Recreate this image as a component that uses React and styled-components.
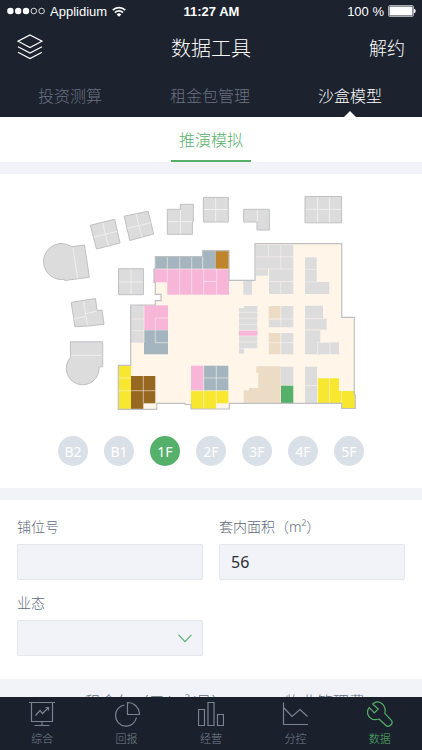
import { useState } from 'react';
import styled, { createGlobalStyle } from 'styled-components';

const tabs = ['投资测算', '租金包管理', '沙盒模型'];
const floors = ['B2', 'B1', '1F', '2F', '3F', '4F', '5F'];

const colors = {
  gray: '#dcdcdd',
  slate: '#a4b5bf',
  pink: '#f7b5d7',
  yellow: '#f8e72f',
  brown: '#976822',
  ochre: '#bf852c',
  sand: '#eddcc5',
  green: '#55b06a',
};

// [color, x, y, x2, y2]
const units = [
  ['slate', 155.3, 256.7, 202.7, 269],
  ['slate', 202.7, 250.7, 215.7, 269],
  ['ochre', 215.7, 250.7, 229, 269],
  ['pink', 154, 269, 168, 282.3],
  ['pink', 167.3, 269, 229, 294.7],
  ['gray', 130.7, 305, 144, 342.7],
  ['pink', 144, 305.3, 168, 330.3],
  ['slate', 144, 330.3, 168, 354.3],
  ['yellow', 118.3, 365.3, 131, 409],
  ['brown', 131, 376, 155.3, 403.3],
  ['brown', 131, 403, 143.3, 409],
  ['pink', 191, 365.7, 203.7, 390.7],
  ['slate', 203.7, 365.7, 228.3, 390.7],
  ['yellow', 191, 390.7, 216, 409],
  ['yellow', 215, 390.7, 228.3, 403.3],
  ['gray', 239, 308, 257.3, 348.7],
  ['gray', 244, 306, 257.3, 309],
  ['gray', 239, 348, 244, 353.7],
  ['pink', 239, 330.3, 257.3, 336],
  ['gray', 243.3, 281, 252, 294.7],
  ['gray', 255.7, 245, 293.3, 269],
  ['gray', 255.7, 269, 268, 275.7],
  ['gray', 269, 268, 293.3, 294],
  ['gray', 305, 257.3, 316.7, 282],
  ['gray', 305, 282, 329.3, 294],
  ['sand', 268.7, 306, 280.7, 318.7],
  ['gray', 281, 306, 293.3, 327.3],
  ['gray', 268.7, 319.3, 281, 327.3],
  ['sand', 268.7, 333, 280.7, 354.3],
  ['gray', 281, 333, 293.3, 354.3],
  ['gray', 305, 305.7, 323, 318.7],
  ['gray', 305, 318.7, 326.7, 329.7],
  ['gray', 305, 330, 320.3, 354.3],
  ['gray', 317.7, 342.3, 339, 354.3],
  ['gray', 281, 366.7, 293.3, 385.3],
  ['green', 281, 385.3, 293.3, 403],
  ['gray', 305, 366.7, 317.3, 403],
  ['yellow', 317.7, 378.3, 339, 403.3],
  ['yellow', 338, 391, 355, 403.3],
  ['yellow', 341.7, 391, 355, 408.3],
];

const mallOutline =
  'M255 243.7H341.7V317.3H354.3V395H355.3V408.5H341.7V403.3H229.3V409H191V404.5H185V403.3H156.7V409.3H118.3V365.3H130.7V305H155.3V300.7H161V294.3H155.3V282.3H154V269H155.3V256.7H202.7V250.7H229V280.3H255Z';

const unitLines = [
  // north west block
  'M167.3 257V269M179.7 257V269M191.7 257V269M202.7 257V269M155 269H229',
  'M167.3 269V282M179.7 269V294.7M191.7 269V294.7M203.7 269V294.7M216.7 269V294.7M203.7 281.5H216.7',
  // west column
  'M131 319H144M131 330.7H144M144 305V343M155.3 342.7V318H168M155.3 342.7H168',
  'M118.3 378H131M118.3 390.7H155.3M143.3 376V403',
  // south block
  'M203.7 366V409M216.3 366V403M203.7 378H228.3M191 390.7H228.3',
  // centre strip
  'M239 312.3H257.3M239 318.3H257.3M239 324.3H257.3M239 330.3H257.3M239 336H257.3M239 342H257.3M239 348.4H257.3',
  // north east blocks
  'M268.3 245V257M280.8 245V269M255.7 256.8H293.3M255.7 269H293.3M268.7 281.5H293.3M280.8 281.5V294M268.4 269V294',
  'M305 269.3H317M305 282H317M280.9 306V327.3M268.7 319H293.3M280.9 333V354.3M268.7 342.7H293.3',
  'M305 318.7H323M305 330H320.3M317.6 342.3V354.3M317.6 342.3H330M330 342.3V354.3',
  'M281 385.3H293.3M305 385.5H317.3M317.6 367V403M329.4 378.3V403.3M341.6 391V403.3',
];

const Icon = ({ name }) => {
  switch (name) {
    case 'board':
      return (
        <TabSvg viewBox='0 0 26 26'>
          <path d='M0 1.5H26M2.5 1.5V20.5H23.5V1.5M13 20.5V24.5M5.5 24.5H20.5M6.5 14.5L11 9.5L13.5 12.5L19.5 6.5M16.5 6.5H19.5V9.5' />
        </TabSvg>
      );
    case 'pie':
      return (
        <TabSvg viewBox='0 0 26 26'>
          <path d='M10.5 4A10.6 10.6 0 1 0 22.5 16.5' />
          <path d='M13.5 1.5V13.5H25.5A12 12 0 0 0 13.5 1.5Z' />
        </TabSvg>
      );
    case 'bars':
      return (
        <TabSvg viewBox='0 0 26 26'>
          <path d='M.5 8.5H6.5V24.5H.5ZM10 1.5H16V24.5H10ZM19.5 13.5H25.5V24.5H19.5Z' />
        </TabSvg>
      );
    case 'line':
      return (
        <TabSvg viewBox='0 0 26 26'>
          <path d='M1.5 1.5V23.5H26M1.5 6.5L10 15.5L18 8.5L25.5 15.5' />
        </TabSvg>
      );
    default:
      return (
        <TabSvg viewBox='0 0 26 26'>
          <path d='M5.7 3L11.3 8L7.3 12L2.3 6.7C0 9.5 0 13 2.2 15.8C4.6 18.6 8.5 19.2 12 18L18.7 24.2C20.2 25.5 22.4 25.4 23.8 24C25.4 22.5 25.4 20.6 24.2 19.2L17.8 12.3C18.8 8.5 17.6 4.8 14.7 2.4C12 .4 8.5 .4 5.7 3Z' />
        </TabSvg>
      );
  }
};

const navItems = [
  { name: 'board', label: '综合' },
  { name: 'pie', label: '回报' },
  { name: 'bars', label: '经营' },
  { name: 'line', label: '分控' },
  { name: 'wrench', label: '数据' },
];

function FloorPlan() {
  return (
    <Plan viewBox='40 190 342 224' role='img' aria-label='1F'>
      <g fill={colors.gray} stroke='#bfc0c3' strokeWidth='1'>
        <path d='M90.3 225.3L114.7 219.3L120 243L96.5 249Z' />
        <path d='M124.2 216.2L148.2 211.2L153.6 234L129.8 240.5Z' />
        <path d='M71.7 246.7L84.5 245L89.3 277.3L64.7 280.5V279.3A18 18 0 1 1 71.7 246.7Z' />
        <path d='M118.5 268.7H143.4V294.7H118.5Z' />
        <path d='M167.3 209.3H180.3V204.3H193.3V221.7H192.4V234.3H167.3Z' />
        <path d='M203.4 197.4H228.3V222H203.4Z' />
        <path d='M243.7 209.3H269.3V230H257V222H243.7Z' />
        <path d='M305 196.5H341.6V222.8H305Z' />
        <path d='M71.2 302.4L95.5 298.5L97 310.7L102 310L104 324.3L88 326L75 326.7Z' />
        <path d='M70.4 341.8H102.7V366.8H99A16.4 16.4 0 1 1 70.4 357.5Z' />
      </g>
      <g fill='none' stroke='#f0efed' strokeWidth='1'>
        <path d='M102.5 222.8L108.3 245.8M93.5 237.3L117.3 231.3M136 214L142 237M127.2 228.2L151 222.8' />
        <path d='M73 247.7L77.7 278.5M131 269.5V294M119 282H143M180.4 210V234M168 221.6H192' />
        <path d='M215.6 198V221.5M204 209.5H228M257.3 210V222M317.4 197V222.3M329.4 197V222.3M305.5 209.4H341' />
        <path d='M83.7 301L87.3 325.5M74 318.5L86 316.5M86.5 313.5L97 311M71 355.3H102' />
      </g>
      <path d={mallOutline} fill='#fff5e9' />
      {units.map(([color, x, y, x2, y2]) => (
        <rect
          key={`${x}-${y}`}
          x={x}
          y={y}
          width={x2 - x}
          height={y2 - y}
          fill={colors[color]}
        />
      ))}
      <path
        d='M256.3 366.3H280.7V403H243.7V390.3H249V388H258.3V373H256.3Z'
        fill={colors.sand}
      />
      <path
        d={unitLines.join('')}
        fill='none'
        stroke='#fff5ee'
        strokeOpacity='.55'
        strokeWidth='1'
      />
      <path d={mallOutline} fill='none' stroke='#bfc0c3' strokeWidth='1.2' />
    </Plan>
  );
}

export default function App() {
  const [tab, setTab] = useState('沙盒模型');
  const [floor, setFloor] = useState('1F');
  const [shop, setShop] = useState('');
  const [area, setArea] = useState('56');

  return (
    <Page>
      <GlobalStyle />
      <StatusBar>
        <Carrier>
          <svg width='38' height='8' viewBox='0 0 38 8' fill='#fff'>
            <circle cx='3.4' cy='4' r='3.2' />
            <circle cx='11.2' cy='4' r='3.2' />
            <circle cx='19' cy='4' r='3.2' />
            <g fill='none' stroke='#fff' strokeWidth='.8'>
              <circle cx='26.8' cy='4' r='2.8' />
              <circle cx='34.6' cy='4' r='2.8' />
            </g>
          </svg>
          <span>Applidium</span>
          <svg width='14' height='11' viewBox='0 0 14 11'>
            <g fill='none' stroke='#fff' strokeWidth='1.7'>
              <path d='M.8 4.1A8.8 8.8 0 0 1 13.2 4.1' />
              <path d='M3 6.6A5.6 5.6 0 0 1 11 6.6' />
            </g>
            <path d='M7 10.8L4.6 8.4A3.4 3.4 0 0 1 9.4 8.4Z' fill='#fff' />
          </svg>
        </Carrier>
        <Clock>11:27 AM</Clock>
        <Battery>
          <span>100 %</span>
          <svg width='28' height='12' viewBox='0 0 28 12'>
            <rect x='.5' y='.5' width='25' height='11' rx='1.5' fill='none' stroke='#a9adb3' />
            <rect x='1.5' y='1.5' width='23' height='9' rx='.5' fill='#fff' />
            <path d='M26 3.7A2.4 2.4 0 0 1 26 8.3Z' fill='#fff' />
          </svg>
        </Battery>
      </StatusBar>

      <Header>
        <IconButton aria-label='图层'>
          <svg width='26' height='26' viewBox='0 0 26 26' fill='none' stroke='#fff' strokeWidth='1.2'>
            <path d='M13 1L25 7.2L13 13.5L1 7.2Z' />
            <path d='M1 12.8L13 19L25 12.8M1 18.2L13 24.5L25 18.2' />
          </svg>
        </IconButton>
        <Title>数据工具</Title>
        <HeaderButton>解约</HeaderButton>
      </Header>

      <Tabs>
        {tabs.map((item) => (
          <Tab key={item} $active={item === tab} onClick={() => setTab(item)}>
            {item}
          </Tab>
        ))}
      </Tabs>

      <Content>
        <SubTabs>
          <SubTab>推演模拟</SubTab>
        </SubTabs>

        <MapCard>
          <FloorPlan />
          <Floors>
            {floors.map((item) => (
              <Floor
                key={item}
                $active={item === floor}
                onClick={() => setFloor(item)}
              >
                {item}
              </Floor>
            ))}
          </Floors>
        </MapCard>

        <Form>
          <Field>
            <Label htmlFor='shop'>铺位号</Label>
            <Input id='shop' value={shop} onChange={(e) => setShop(e.target.value)} />
          </Field>
          <Field>
            <Label htmlFor='area'>套内面积（m²）</Label>
            <Input id='area' value={area} onChange={(e) => setArea(e.target.value)} />
          </Field>
          <Field>
            <Label htmlFor='type'>业态</Label>
            <SelectBox>
              <Select id='type' defaultValue=''>
                <option value='' />
              </Select>
              <svg width='14' height='9' viewBox='0 0 14 9' fill='none' stroke='#55b06a' strokeWidth='1.2'>
                <path d='M.6 .8L7 7.6L13.4 .8' />
              </svg>
            </SelectBox>
          </Field>
        </Form>

        <RentTable>
          <thead>
            <tr>
              <th />
              <th>租金包（元/m²/月）</th>
              <th>物业管理费</th>
              <th />
            </tr>
          </thead>
        </RentTable>
      </Content>

      <NavBar>
        {navItems.map((item) => (
          <NavLink key={item.name} href='#' $active={item.name === 'wrench'}>
            <Icon name={item.name} />
            {item.label}
          </NavLink>
        ))}
      </NavBar>
    </Page>
  );
}

const GlobalStyle = createGlobalStyle`
  * {
    box-sizing: border-box;
  }
  body {
    margin: 0;
    font-family: 'Noto Sans', 'Noto Sans CJK SC', sans-serif;
    font-weight: 300;
  }
  button, input, select {
    font: inherit;
    border: none;
    padding: 0;
    background: none;
  }
  button {
    cursor: pointer;
  }
`;

const Page = styled.div`
  display: flex;
  flex-direction: column;
  height: 100vh;
  background-color: #f2f3f8;
`;

const StatusBar = styled.div`
  display: grid;
  grid-template-columns: 1fr auto 1fr;
  align-items: center;
  height: 22px;
  padding: 0 6px 0 7px;
  background-color: #1c222e;
  color: #fff;
  font: 400 13px 'Liberation Sans', Arial, sans-serif;
`;
const Carrier = styled.div`
  display: flex;
  align-items: center;
  gap: 5px;
`;
const Clock = styled.span`
  font-weight: bold;
`;
const Battery = styled.div`
  display: flex;
  align-items: center;
  justify-content: flex-end;
  gap: 4px;
`;

const Header = styled.header`
  display: grid;
  grid-template-columns: 1fr auto 1fr;
  align-items: center;
  height: 50px;
  padding: 0 17px;
  background-color: #1c222e;
  color: #fff;
`;
const IconButton = styled.button`
  display: flex;
  justify-self: start;
`;
const Title = styled.h1`
  margin: 0;
  font-size: 20px;
  font-weight: 300;
`;
const HeaderButton = styled.button`
  justify-self: end;
  color: #fff;
  font-size: 18px;
`;

const Tabs = styled.nav`
  display: flex;
  height: 45px;
  padding-right: 2px;
  background-color: #1c222e;
`;
const Tab = styled.button`
  position: relative;
  flex: 1;
  font-size: 16px;
  color: ${({ $active }) => ($active ? '#fff' : '#6a7382')};

  &::after {
    content: '';
    display: ${({ $active }) => ($active ? 'block' : 'none')};
    position: absolute;
    left: 50%;
    bottom: 0;
    transform: translateX(-50%);
    border: 6px solid transparent;
    border-top: none;
    border-bottom-color: #fff;
  }
`;

const Content = styled.main`
  flex: 1;
  min-height: 0;
  overflow-y: auto;
  scrollbar-width: none;
`;

const SubTabs = styled.div`
  display: flex;
  justify-content: center;
  height: 45px;
  background-color: #fff;
`;
const SubTab = styled.button`
  padding: 0 8px;
  border-bottom: 2px solid #55b06a;
  color: #55b06a;
  font-size: 16px;
`;

const MapCard = styled.section`
  margin: 12px 0;
  padding: 16px 40px 22px;
  background-color: #fff;
`;
const Plan = styled.svg`
  display: block;
  width: 100%;
`;
const Floors = styled.div`
  display: flex;
  justify-content: space-between;
  margin-top: 22px;
  padding: 0 18px;
`;
const Floor = styled.button`
  width: 30px;
  height: 30px;
  border-radius: 50%;
  color: #fff;
  font-size: 14px;
  font-weight: 400;
  background-color: ${({ $active }) => ($active ? '#55b06a' : '#dae0e7')};
`;

const Form = styled.form`
  display: grid;
  grid-template-columns: 1fr 1fr;
  gap: 12px 16px;
  padding: 16px 17px 23px;
  background-color: #fff;
`;
const Field = styled.div`
  display: flex;
  flex-direction: column;
  gap: 6px;
`;
const Label = styled.label`
  color: #5f6c7e;
  font-size: 14px;
  line-height: 22px;
`;
const Input = styled.input`
  width: 100%;
  height: 36px;
  padding: 0 11px;
  border: 1px solid #e3e6ee;
  border-radius: 2px;
  background-color: #f2f3f8;
  color: #2b2e34;
  font-size: 16px;
  font-weight: 400;
`;
const SelectBox = styled.div`
  display: grid;
  align-items: center;

  & > * {
    grid-area: 1 / 1;
  }
  svg {
    justify-self: end;
    margin-right: 11px;
    pointer-events: none;
  }
`;
const Select = styled(Input).attrs({ as: 'select' })`
  appearance: none;
`;

const RentTable = styled.table`
  width: 100%;
  border-collapse: collapse;
  table-layout: fixed;
  color: #5f6c7e;
  font-size: 16px;

  th {
    width: 40%;
    height: 44px;
    padding: 0;
    font-weight: 300;
    white-space: nowrap;
  }
  th:first-child {
    width: 17%;
  }
  th:last-child {
    width: 3%;
  }
`;

const NavBar = styled.nav`
  display: flex;
  height: 53px;
  background-color: #1a212c;
`;
const NavLink = styled.a`
  flex: 1;
  display: flex;
  flex-direction: column;
  align-items: center;
  gap: 4px;
  padding-top: 4px;
  color: ${({ $active }) => ($active ? '#55b06a' : '#7b8391')};
  font-size: 11px;
  line-height: 16px;
  text-decoration: none;
`;
const TabSvg = styled.svg`
  width: 26px;
  height: 26px;
  fill: none;
  stroke: currentColor;
  stroke-width: 1.2;
`;
